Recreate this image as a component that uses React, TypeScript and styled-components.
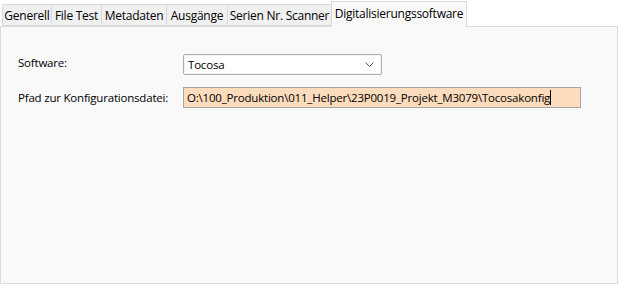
import styled, { createGlobalStyle } from "styled-components";

const GlobalStyle = createGlobalStyle`
  html, body {
    margin: 0;
    padding: 0;
    background: #ffffff;
  }
  body {
    font-family: "Open Sans", "Noto Sans", sans-serif;
    font-size: 11.5px;
    color: #000;
  }
`;

const Window = styled.div`
  width: 624px;
  height: 289px;
  padding: 1px 6px 5px 0;
  box-sizing: border-box;
  display: flex;
  flex-direction: column;
`;

const TabStrip = styled.div`
  display: flex;
  align-items: flex-end;
  height: 25px;
  padding-left: 2px;
  position: relative;
  z-index: 1;
`;

const Tab = styled.div<{ $active?: boolean; $w: number }>`
  width: ${(p) => p.$w}px;
  box-sizing: border-box;
  height: ${(p) => (p.$active ? 26 : 22)}px;
  margin-bottom: ${(p) => (p.$active ? -1 : 0)}px;
  margin-left: ${(p) => (p.$active ? -1 : 0)}px;
  background: ${(p) => (p.$active ? "#f9f9f9" : "#f0f0f0")};
  border: 1px solid #d9d9d9;
  border-bottom: ${(p) => (p.$active ? "none" : "1px solid #d9d9d9")};
  border-left: ${(p) => (p.$active ? "1px solid #d9d9d9" : "none")};
  display: flex;
  align-items: center;
  justify-content: center;
  padding-bottom: ${(p) => (p.$active ? 3 : 0)}px;
  white-space: nowrap;
  font-size: 12px;
  letter-spacing: -0.25px;
  &:first-child {
    border-left: 1px solid #d9d9d9;
  }
`;

const Panel = styled.div`
  flex: 1;
  background: #f9f9f9;
  border: 1px solid #dcdcdc;
  display: grid;
  grid-template-columns: 165px 1fr;
  grid-auto-rows: min-content;
  row-gap: 12px;
  align-items: center;
  padding: 27px 0 0 17px;
  align-content: start;
`;

const Label = styled.span<{ $lift?: number }>`
  letter-spacing: -0.2px;
  position: relative;
  top: -${(p) => p.$lift ?? 0}px;
`;

const ComboBox = styled.div`
  width: 199px;
  height: 21px;
  box-sizing: border-box;
  border: 1px solid #adadad;
  border-radius: 2px;
  background: #ffffff;
  box-shadow: inset 0 0 0 1px #f4f4f4;
  display: flex;
  align-items: center;
  justify-content: space-between;
  padding: 0 7px 0 4px;
  letter-spacing: -0.2px;
`;

const TextField = styled.div`
  width: 398px;
  height: 21px;
  box-sizing: border-box;
  border: 1px solid #a6a6a6;
  background: #fcdcbc;
  display: flex;
  align-items: center;
  padding: 0 3px;
  white-space: nowrap;
  letter-spacing: -0.2px;
`;

const Caret = styled.span`
  display: inline-block;
  width: 1px;
  height: 15px;
  background: #000;
`;

const tabs = [
  { label: "Generell", w: 50 },
  { label: "File Test", w: 50 },
  { label: "Metadaten", w: 65 },
  { label: "Ausgänge", w: 61 },
  { label: "Serien Nr. Scanner", w: 104 },
  { label: "Digitalisierungssoftware", w: 136, active: true },
];

export default function App() {
  return (
    <>
      <GlobalStyle />
      <Window>
        <TabStrip>
          {tabs.map((t) => (
            <Tab key={t.label} $w={t.w} $active={t.active}>
              {t.label}
            </Tab>
          ))}
        </TabStrip>
        <Panel>
          <Label $lift={2}>Software:</Label>
          <ComboBox>
            <span>Tocosa</span>
            <svg width="9" height="5" viewBox="0 0 9 5">
              <path d="M0.5 0.5 L4.5 4.5 L8.5 0.5" fill="none" stroke="#555" strokeWidth="1" />
            </svg>
          </ComboBox>
          <Label>Pfad zur Konfigurationsdatei:</Label>
          <TextField>
            O:\100_Produktion\011_Helper\23P0019_Projekt_M3079\Tocosakonfig
            <Caret />
          </TextField>
        </Panel>
      </Window>
    </>
  );
}
